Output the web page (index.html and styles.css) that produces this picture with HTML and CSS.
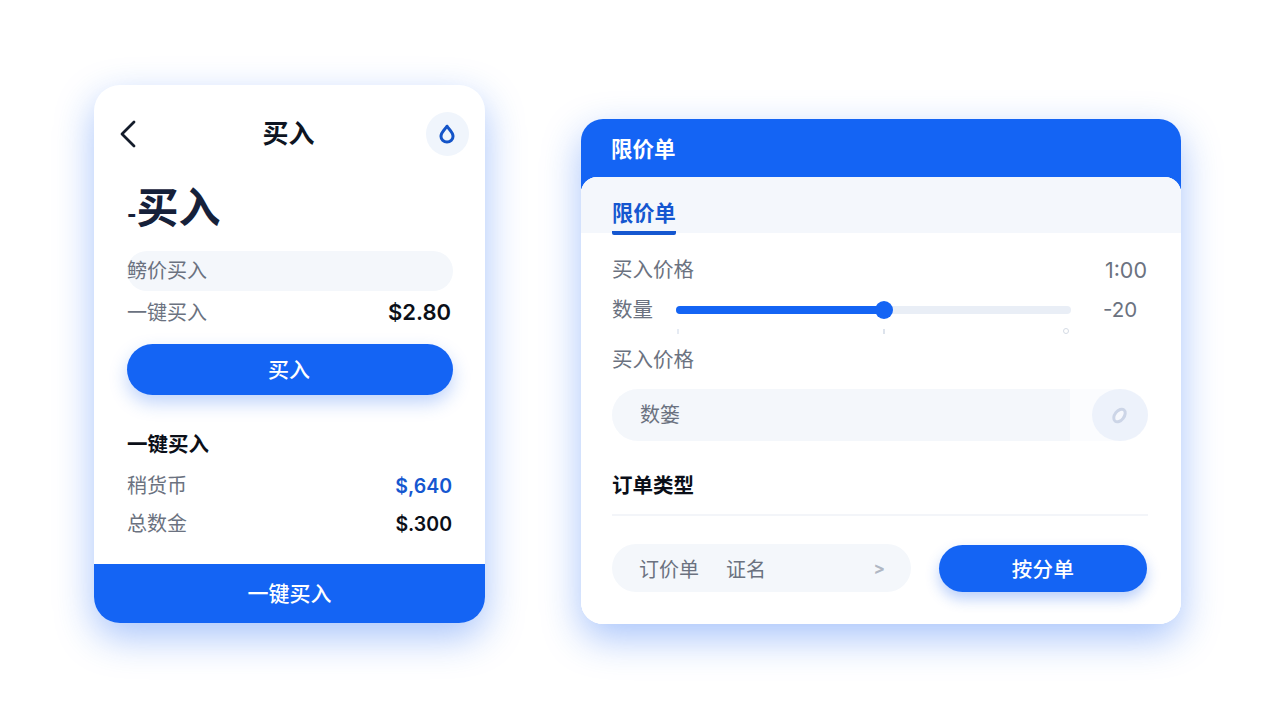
FILE: index.html
```html
<!DOCTYPE html>
<html lang="zh-CN">
<head>
<meta charset="utf-8">
<title>买入</title>
<link rel="stylesheet" href="styles.css">
</head>
<body>
<main class="stage">
  <section class="card buy">
    <header class="topbar">
      <svg class="back" width="18" height="28" viewBox="0 0 18 28"><path d="M15 2 3 14l12 12" fill="none" stroke="#141c2b" stroke-width="2.8" stroke-linecap="round" stroke-linejoin="round"/></svg>
      <h1 class="topbar-title">买入</h1>
      <span class="drop-btn">
        <svg width="18" height="20" viewBox="0 0 18 20"><path d="M9 2.2 C10.2 4.8 15 8 15 12.5 A6 5.6 0 0 1 3 12.5 C3 8 7.8 4.8 9 2.2Z" fill="none" stroke="#1454c8" stroke-width="3" stroke-linejoin="round"/></svg>
      </span>
    </header>
    <h2 class="big"><span class="dash">-</span>买入</h2>
    <div class="soft-pill">鳑价买入</div>
    <div class="row row-first"><span class="muted">一键买入</span><strong class="amount">$2.80</strong></div>
    <button class="cta">买入</button>
    <h3 class="section">一键买入</h3>
    <div class="row row-a"><span class="muted">稍货币</span><strong class="amount amount-sm amount-blue">$,640</strong></div>
    <div class="row row-b"><span class="muted">总数金</span><strong class="amount amount-sm">$.300</strong></div>
    <button class="footer-cta">一键买入</button>
  </section>

  <section class="card limit">
    <header class="limit-head">限价单</header>
    <div class="panel">
      <div class="tabs"><span class="tab">限价单</span></div>
      <div class="panel-body">
        <div class="line line-price"><span class="muted">买入价格</span><span class="muted price-value">1:00</span></div>
        <div class="line line-qty">
          <span class="muted">数量</span>
          <div class="slider"><div class="slider-fill"></div><span class="thumb"></span></div>
          <span class="muted qty-value">-20</span>
        </div>
        <div class="ticks"><i class="tick"></i><i class="tick tick-mid"></i><i class="tick tick-round"></i></div>
        <div class="line line-label"><span class="muted">买入价格</span></div>
        <div class="field">
          <div class="field-main">数篓</div>
          <span class="field-btn">
            <svg width="20" height="22" viewBox="0 0 20 22"><ellipse cx="9.5" cy="11.5" rx="4.6" ry="7.2" transform="rotate(38 9.5 11.5)" fill="#f6f8fd" stroke="#ccd5e7" stroke-width="3"/></svg>
          </span>
        </div>
        <h3 class="section section-right">订单类型</h3>
        <div class="divider"></div>
        <div class="bottom">
          <div class="select"><span>订价单</span><span class="select-name">证名</span><span class="select-arrow">&gt;</span></div>
          <button class="submit">按分单</button>
        </div>
      </div>
    </div>
  </section>
</main>
</body>
</html>
```

FILE: styles.css
```css
* { box-sizing: border-box; }
html, body { margin: 0; height: 100%; }
body {
  background: #fff;
  font-family: "Inter", "Liberation Sans", "Noto Sans CJK SC", sans-serif;
  color: #141c2b;
  overflow: hidden;
}
h1, h2, h3 { margin: 0; }
button { border: 0; font-family: inherit; padding: 0; color: #fff; font-weight: 500; }

.stage {
  width: 1280px;
  height: 720px;
  display: flex;
  align-items: flex-start;
  gap: 96px;
  padding: 85px 0 0 94px;
}
.card {
  box-shadow: 0 14px 38px rgba(25, 100, 245, .38);
}
.muted { color: #6b7280; font-size: 20px; line-height: 30px; padding-top: 2px; }
.amount { font-size: 22px; line-height: 30px; font-weight: 600; color: #0b0f18; margin-right: 2px; }
.amount-sm { font-size: 19.5px; margin-right: 1px; padding-top: 1px; }
.amount-blue { color: #1557d0; }

/* left card */
.buy {
  width: 391px;
  height: 538px;
  border-radius: 26px;
  background: #fff;
  padding: 27px 32px 0 33px;
  display: flex;
  flex-direction: column;
  overflow: hidden;
}
.topbar { display: flex; align-items: center; justify-content: space-between; height: 44px; margin-right: -16px; }
.back { margin-left: -8px; }
.topbar-title { font-size: 26px; line-height: 48px; font-weight: 700; margin-left: 14px; color: #0e1522; }
.drop-btn { width: 43px; height: 44px; border-radius: 50%; background: #f0f5fc; display: flex; align-items: center; justify-content: center; }
.big { height: 50px; font-size: 42px; line-height: 50px; font-weight: 700; color: #16213a; margin-top: 27px; }
.dash { font-size: 20px; font-weight: 900; line-height: 0; vertical-align: 2px; }
.soft-pill { height: 40px; margin-top: 18px; border-radius: 20px; background: #f4f7fb; color: #6b7280; font-size: 20px; line-height: 40px; }
.row { display: flex; justify-content: space-between; align-items: center; height: 30px; }
.row-first { margin-top: 6px; }
.row-a { margin-top: 11px; }
.row-b { margin-top: 8px; }
.cta {
  height: 51px;
  margin-top: 17px;
  padding: 0 2px 3px 0;
  border-radius: 26px;
  background: #1464f4;
  font-size: 21px;
  box-shadow: 0 8px 18px rgba(30, 100, 240, .28);
}
.section { font-size: 20.5px; line-height: 32px; font-weight: 700; color: #0b0f18; }
.buy .section { margin-top: 34px; height: 30px; }
.footer-cta {
  margin: auto -32px 0 -33px;
  height: 59px;
  padding-bottom: 3px;
  background: #1464f4;
  font-size: 21px;
  flex: none;
}

/* right card */
.limit {
  width: 600px;
  height: 505px;
  margin-top: 34px;
  border-radius: 22px;
  background: linear-gradient(#1464f4 0 70px, #fff 70px);
  display: flex;
  flex-direction: column;
  overflow: hidden;
}
.limit-head { height: 58px; padding-left: 30px; color: #fff; font-size: 21.5px; font-weight: 700; line-height: 60px; flex: none; }
.panel { flex: 1; background: #fff; border-radius: 16px 16px 0 0; overflow: hidden; }
.tabs { height: 56px; background: #f4f7fc; padding-left: 31px; display: flex; align-items: flex-end; }
.tab { color: #1557d0; font-size: 21.3px; font-weight: 700; line-height: 30px; padding-bottom: 3px; border-bottom: 4px solid #1557d0; margin-bottom: -2px; border-radius: 2px; position: relative; z-index: 1; }
.panel-body { padding: 22px 33px 0 31px; }
.line { display: flex; align-items: center; height: 30px; }
.line .muted { font-size: 20.5px; padding-top: 0; }
.line-price { justify-content: space-between; }
.line .price-value { font-size: 21.5px; margin-right: 1px; }
.line-qty { margin-top: 10px; }
.slider { width: 395px; height: 8px; margin-left: 23px; border-radius: 4px; background: #e9eef6; position: relative; }
.slider-fill { width: 208px; height: 8px; border-radius: 4px; background: #1464f4; }
.thumb { position: absolute; left: 199px; top: -5px; width: 18px; height: 18px; border-radius: 50%; background: #1464f4; }
.line .qty-value { margin-left: 32px; }
.ticks { display: flex; align-items: center; height: 6px; margin: 3px 0 0 65px; }
.tick { width: 2px; height: 5px; background: #e6ebf3; flex: none; }
.tick-mid { margin-left: 204px; background: #dde3ec; }
.tick-round { width: 6px; height: 6px; margin-left: 178px; border-radius: 50%; background: none; border: 1px solid #d5dbe5; }
.line-label { margin-top: 11px; }
.field { display: flex; height: 52px; margin-top: 14px; background: #fbfcfe; border-radius: 26px; }
.field-main { flex: 1; padding-left: 28px; border-radius: 26px 0 0 26px; background: #f4f7fb; color: #6b7280; font-size: 20px; line-height: 52px; }
.field-btn { width: 56px; margin-left: 22px; border-radius: 50%; background: #edf2fb; display: flex; align-items: center; justify-content: center; }
.section-right { margin-top: 29px; height: 30px; }
.divider { height: 2px; margin-top: 14px; background: #f3f5f9; }
.bottom { display: flex; justify-content: space-between; align-items: center; margin-top: 28px; }
.select { width: 299px; height: 48px; padding: 0 26px 0 27px; border-radius: 24px; background: #f4f7fb; display: flex; align-items: center; color: #6b7280; font-size: 20px; }
.select-name { margin-left: 27px; }
.select-arrow { margin-left: auto; color: #b0b7c4; font-size: 17px; font-weight: 700; }
.submit { width: 208px; height: 47px; margin-right: 1px; border-radius: 24px; background: #1464f4; font-size: 20.5px; box-shadow: 0 7px 14px rgba(30, 100, 240, .3); letter-spacing: .3px; }
```
